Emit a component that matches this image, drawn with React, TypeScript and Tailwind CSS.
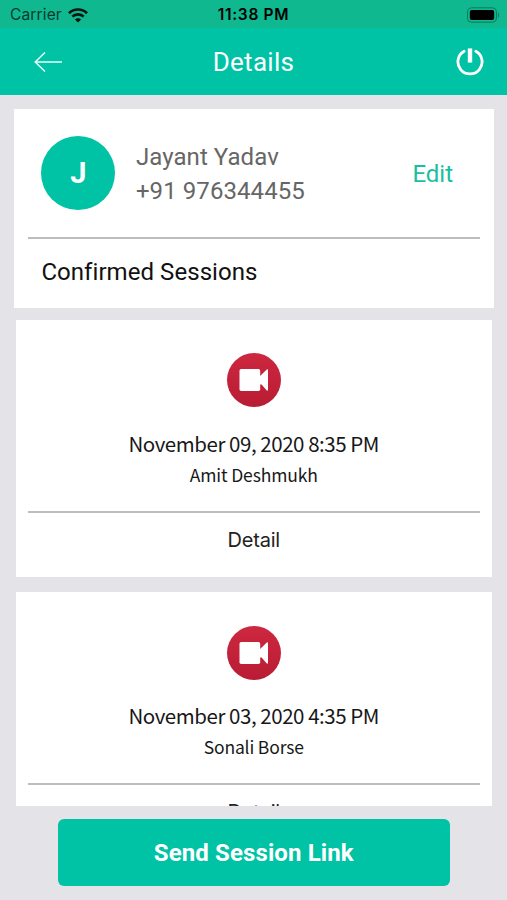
import React from "react";

interface Session {
  id: number;
  date: string;
  name: string;
}

const sessions: Session[] = [
  { id: 1, date: "November 09, 2020 8:35 PM", name: "Amit Deshmukh" },
  { id: 2, date: "November 03, 2020 4:35 PM", name: "Sonali Borse" },
];

function StatusBar() {
  return (
    <div className="grid h-7 shrink-0 grid-cols-3 items-center bg-[#0fb88f] pl-[10px] pr-[8px] pt-[2px] font-['Inter',sans-serif] text-black">
      <div className="flex items-center gap-[6px]">
        <span className="text-[15.5px] leading-none tracking-[0.15px] text-[#05392e]">Carrier</span>
        <svg width="20" height="15" viewBox="0 0 20 15" fill="none" stroke="#03150f">
          <path d="M1 5.2a12.8 12.8 0 0 1 18 0" strokeWidth="2.7" />
          <path d="M4.3 8.7a8.1 8.1 0 0 1 11.4 0" strokeWidth="2.6" />
          <path d="M10 14.6 6.9 11.5a4.4 4.4 0 0 1 6.2 0z" fill="#03150f" stroke="none" />
        </svg>
      </div>
      <span className="-ml-[2px] text-center text-[15.5px] font-semibold leading-none tracking-[0.7px]">
        11:38 PM
      </span>
      <svg className="justify-self-end" width="33" height="16" viewBox="0 0 33 16">
        <rect x="1.5" y="0.8" width="29" height="14.4" rx="4" fill="none" stroke="#087a5f" />
        <rect x="3.8" y="3" width="24.4" height="10" rx="2" fill="#000" />
        <path d="M32 5.6c1.6.8 1.6 4 0 4.8z" fill="#087a5f" />
      </svg>
    </div>
  );
}

function Header() {
  return (
    <header className="grid h-[67px] shrink-0 grid-cols-3 items-center bg-[#00c3a5] pl-[34px] pr-[23px]">
      <svg width="29" height="22" viewBox="0 0 29 22" fill="none" stroke="#e6fffa" strokeWidth="1.5">
        <path d="M28 11H1.2M11 1.5 1.2 11l9.8 9.5" />
      </svg>
      <h1 className="-ml-[11px] text-center text-[26px] leading-none tracking-[0.3px] text-white">Details</h1>
      <svg className="justify-self-end" width="28" height="28" viewBox="0 0 28 28" fill="none" stroke="#fff">
        <path d="M8.1 3.3a12.1 12.1 0 1 0 11.8 0" strokeWidth="2.8" strokeLinecap="round" />
        <path d="M14 .4v14.2" strokeWidth="4.4" />
      </svg>
    </header>
  );
}

function ProfileCard() {
  return (
    <section className="ml-[14.4px] mr-[13px] h-[199px] shrink-0 bg-white px-[13.6px]">
      <div className="flex h-[128px] items-center pl-[13.4px] pr-[27.4px]">
        <div className="flex size-[74px] items-center justify-center rounded-full bg-[#00c3a5] pt-px text-[29px] font-bold text-white">
          J
        </div>
        <div className="ml-[20.5px] flex-1 pt-px text-[24px] leading-[34px] tracking-[0.08px] text-[#666]">
          <p>Jayant Yadav</p>
          <p>+91 976344455</p>
        </div>
        <button className="pt-[2px] text-[24px] text-[#1abf9f]">Edit</button>
      </div>
      <div className="h-[2px] bg-[#bdbdbd]" />
      <h2 className="pl-[13.4px] text-[24px] leading-[67px] tracking-[0.06px] text-[#111]">Confirmed Sessions</h2>
    </section>
  );
}

function SessionCard({ session }: { session: Session }) {
  return (
    <article className="flex h-[257px] shrink-0 flex-col items-center bg-white px-[11.5px] pt-[33.3px]">
      <div className="flex size-[54px] items-center justify-center rounded-full bg-linear-to-b from-[#cd2840] to-[#b81c34]">
        <svg width="30" height="22" viewBox="0 0 30 22" fill="#fff">
          <rect x="0.5" y="0" width="20.7" height="22" rx="1.7" />
          <path d="M20.8 7.2 27.8.6Q29 -.2 29 1.4v19.2q0 1.6-1.2.8L22.6 15.6H20.8z" />
        </svg>
      </div>
      <div className="flex flex-col items-center font-['Noto_Sans_CJK_SC','Noto_Sans',sans-serif] text-[#181818]">
        <p className="mt-[19.7px] text-[20.5px] leading-[32px] tracking-[-0.45px]">{session.date}</p>
        <p className="mt-[3px] text-[17.5px] leading-[26px] tracking-[-0.15px]">{session.name}</p>
      </div>
      <div className="mt-[23px] h-[2px] w-full shrink-0 bg-[#bdbdbd]" />
      <button className="mt-[14px] font-['Inter',sans-serif] text-[20px] leading-[26px] tracking-[-0.2px] text-[#222]">
        Detail
      </button>
    </article>
  );
}

export default function App() {
  return (
    <div className="flex h-[900px] w-[507px] flex-col overflow-hidden bg-[#e4e4e8] font-['Roboto',sans-serif]">
      <StatusBar />
      <Header />
      <div className="h-[14px] shrink-0" />
      <ProfileCard />
      <div className="ml-[16px] mr-[15.5px] mt-[12px] flex h-[486px] shrink-0 flex-col gap-[15.4px] overflow-hidden">
        {sessions.map((s) => (
          <SessionCard key={s.id} session={s} />
        ))}
      </div>
      <button className="ml-[58px] mt-[13px] h-[67px] w-[391.5px] shrink-0 rounded-[6px] bg-[#00c3a5] text-[24px] font-bold tracking-[0.12px] text-white">
        Send Session Link
      </button>
    </div>
  );
}
